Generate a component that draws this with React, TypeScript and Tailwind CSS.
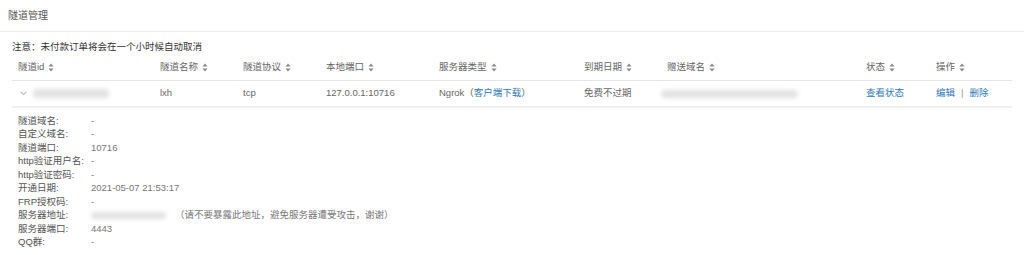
import { ReactNode } from 'react';

const font = { fontFamily: '"Liberation Sans", "Noto Sans CJK SC", sans-serif' };

function SortIcon() {
  return (
    <svg width="6" height="9" viewBox="0 0 6 9" className="ml-[4px] inline-block">
      <path d="M3 0.5 L5.6 3.6 L0.4 3.6 Z" fill="#8a8a8a" />
      <path d="M3 8.5 L5.6 5.4 L0.4 5.4 Z" fill="#8a8a8a" />
    </svg>
  );
}

function Blur({ className }: { className: string }) {
  return <div className={`bg-[#e2e2e2] blur-[2px] rounded-sm ${className}`} />;
}

const columns = ['隧道id', '隧道名称', '隧道协议', '本地端口', '服务器类型', '到期日期', '赠送域名', '状态', '操作'];

const details: { label: string; value: ReactNode }[] = [
  { label: '隧道域名:', value: '-' },
  { label: '自定义域名:', value: '-' },
  { label: '隧道端口:', value: '10716' },
  { label: 'http验证用户名:', value: '-' },
  { label: 'http验证密码:', value: '-' },
  { label: '开通日期:', value: '2021-05-07 21:53:17' },
  { label: 'FRP授权码:', value: '-' },
  {
    label: '服务器地址:',
    value: (
      <span className="flex items-center">
        <Blur className="w-[75px] h-[7px] mr-[9px]" />
        <span>（请不要暴露此地址，避免服务器遭受攻击，谢谢）</span>
      </span>
    ),
  },
  { label: '服务器端口:', value: '4443' },
  { label: 'QQ群:', value: '-' },
];

export default function App() {
  return (
    <div className="w-[1024px] h-[255px] bg-white text-[9.5px] text-[#555] overflow-hidden" style={font}>
      {/* Title */}
      <div className="h-[32px] px-[8px] flex items-center border-b border-[#ececec] text-[10px] text-[#555]">
        隧道管理
      </div>

      <div className="mx-[12px]">
        <div className="mt-[8px] leading-[14px] text-[#333]">注意：未付款订单将会在一个小时候自动取消</div>

        {/* Table header */}
        <div className="grid grid-cols-[142px_83px_83px_113px_145px_83px_199px_70px_1fr] h-[27px] items-center border-b border-[#e6e6e6] text-[#666]">
          {columns.map((c) => (
            <div key={c} className="pl-[6px] flex items-center">
              <span>{c}</span>
              <SortIcon />
            </div>
          ))}
        </div>

        {/* Data row */}
        <div className="grid grid-cols-[142px_83px_83px_113px_145px_83px_199px_70px_1fr] h-[27px] items-center border-b-2 border-[#f0f0f0] text-[#666]">
          <div className="pl-[6px] flex items-center">
            <svg width="7" height="5" viewBox="0 0 7 5" className="ml-[2px]">
              <path d="M0.5 0.8 L3.5 3.8 L6.5 0.8" stroke="#999" strokeWidth="0.9" fill="none" />
            </svg>
            <Blur className="ml-[6px] w-[76px] h-[9px]" />
          </div>
          <div className="pl-[6px]">lxh</div>
          <div className="pl-[6px]">tcp</div>
          <div className="pl-[6px]">127.0.0.1:10716</div>
          <div className="pl-[6px]">
            Ngrok（<span className="text-[#337ab7]">客户端下载</span>）
          </div>
          <div className="pl-[6px]">免费不过期</div>
          <div className="pl-[0px]">
            <Blur className="w-[137px] h-[8px]" />
          </div>
          <div className="pl-[6px] text-[#337ab7]">查看状态</div>
          <div className="pl-[6px] flex items-center">
            <span className="text-[#337ab7]">编辑</span>
            <span className="mx-[6px] text-[#999]">|</span>
            <span className="text-[#337ab7]">删除</span>
          </div>
        </div>

        {/* Expanded details */}
        <div className="pt-[6px] pl-[6px] text-[#555]">
          {details.map((d) => (
            <div key={d.label} className="flex items-center h-[13.5px]">
              <div className="w-[73px] shrink-0 whitespace-nowrap">{d.label}</div>
              <div className="text-[#777]">{d.value}</div>
            </div>
          ))}
        </div>
      </div>
    </div>
  );
}
